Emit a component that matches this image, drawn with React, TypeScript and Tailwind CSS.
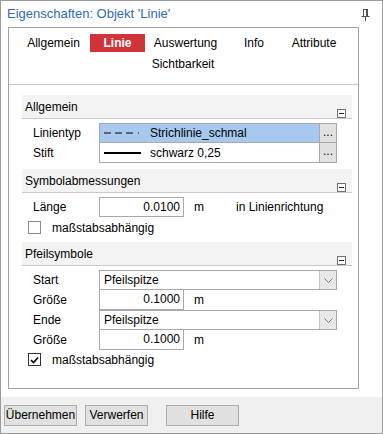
import React from 'react';

const font = { fontFamily: '"Liberation Sans", Arial, sans-serif' };

function Collapse() {
  return (
    <div className="w-[9px] h-[9px] border border-[#6f6f6f] bg-white flex items-center justify-center">
      <div className="w-[5px] h-px bg-[#222]" />
    </div>
  );
}

function SectionHeader({ title }: { title: string }) {
  return (
    <div className="h-[24px] bg-[#f3f3f3] border-b border-[#c9c9c9] flex justify-between pl-[3px] pr-[6px]">
      <span className="text-[12px] leading-[24px] text-black">{title}</span>
      <div className="pt-[14px]">
        <Collapse />
      </div>
    </div>
  );
}

function Chevron() {
  return (
    <svg width="9" height="5" viewBox="0 0 9 5">
      <path d="M0.5 0.5 L4.5 4.5 L8.5 0.5" fill="none" stroke="#7a7a7a" strokeWidth="1" />
    </svg>
  );
}

function Dropdown({ value }: { value: string }) {
  return (
    <div className="w-[238px] h-[20px] border border-[#a9a9a9] bg-white flex">
      <div className="flex-1 pl-[4px] text-[12px] leading-[18px]">{value}</div>
      <div className="w-[17px] bg-[#e8e8e8] border-l border-[#c4c4c4] flex items-center justify-center">
        <Chevron />
      </div>
    </div>
  );
}

function NumInput({ value, top = true }: { value: string; top?: boolean }) {
  return (
    <div
      className={
        'w-[85px] h-[20px] border-x border-b border-[#a9a9a9] bg-white text-right pr-[3px] text-[12px] leading-[18px] ' +
        (top ? 'border-t' : 'border-t-0')
      }
    >
      {value}
    </div>
  );
}

function Checkbox({ checked, label }: { checked: boolean; label: string }) {
  return (
    <div className="flex items-center pl-[6px] h-[13px]">
      <div
        className={
          'w-[13px] h-[13px] bg-white flex items-center justify-center ' +
          (checked ? 'border border-[#333]' : 'border border-[#8a8a8a]')
        }
      >
        {checked && (
          <svg width="9" height="8" viewBox="0 0 9 8">
            <path d="M1 4 L3.5 6.5 L8 1.5" fill="none" stroke="#000" strokeWidth="1.6" />
          </svg>
        )}
      </div>
      <span className="ml-[11px] text-[12px]">{label}</span>
    </div>
  );
}

function Label({ text }: { text: string }) {
  return <div className="w-[77px] pl-[11px] text-[12px] leading-[20px]">{text}</div>;
}

export default function App() {
  return (
    <div style={font} className="w-[383px] h-[434px] border border-[#9b9b9b] bg-white flex flex-col text-black">
      {/* title */}
      <div className="h-[26px] flex justify-between items-start">
        <span className="pl-[6px] pt-[5px] text-[13px] leading-[16px] text-[#2f6ab3]">
          Eigenschaften: Objekt 'Linie'
        </span>
        <svg className="mr-[12px] mt-[8px]" width="9" height="12" viewBox="0 0 9 12">
          <path d="M2 0.5 H7 M2.5 0.5 V7 M6.5 0.5 V7 M0.5 7.5 H8.5 M4.5 7.5 V12" stroke="#505050" strokeWidth="1" fill="none" />
          <rect x="5" y="1" width="1" height="6" fill="#505050" />
        </svg>
      </div>

      {/* inner panel */}
      <div className="ml-[7px] w-[351px] h-[362px] border border-[#a3a3a3] flex flex-col">
        {/* tabs */}
        <div className="h-[57px] border-b border-[#c9c9c9] pt-[6px] text-[12px]">
          <div className="flex h-[18px] items-center">
            <div className="ml-[9px] w-[71px] text-center">Allgemein</div>
            <div className="ml-[1px] w-[55px] h-[18px] bg-[#d13438] text-white font-bold text-center leading-[18px]">Linie</div>
            <div className="w-[81px] text-center">Auswertung</div>
            <div className="w-[56px] text-center">Info</div>
            <div className="w-[64px] text-center">Attribute</div>
          </div>
          <div className="flex h-[18px] items-center mt-[3px]">
            <div className="ml-[136px] w-[76px] text-center">Sichtbarkeit</div>
          </div>
        </div>

        {/* content */}
        <div className="pl-[13px] pr-[6px] pt-[10px] flex flex-col">
          <SectionHeader title="Allgemein" />
          <div className="flex mt-[4px]">
            <div className="flex flex-col">
              <Label text="Linientyp" />
              <Label text="Stift" />
            </div>
            <div className="w-[238px] border border-[#a9a9a9] flex flex-col bg-white text-[12px]">
              <div className="h-[19px] flex border-b border-[#a9a9a9]">
                <div className="flex-1 bg-[#a7c9ef] flex items-center pl-[4px]">
                  <svg width="40" height="4" viewBox="0 0 40 4">
                    <path d="M0 2 H7 M11 2 H18 M22 2 H29 M34 2 H35" stroke="#000" strokeWidth="1" />
                  </svg>
                  <span className="ml-[6px]">Strichlinie_schmal</span>
                </div>
                <div className="w-[17px] bg-[#e1e1e1] border-l border-[#a9a9a9] text-center leading-[16px]">...</div>
              </div>
              <div className="h-[19px] flex">
                <div className="flex-1 flex items-center pl-[4px]">
                  <svg width="40" height="4" viewBox="0 0 40 4">
                    <path d="M0 2 H37" stroke="#000" strokeWidth="2" />
                  </svg>
                  <span className="ml-[6px]">schwarz 0,25</span>
                </div>
                <div className="w-[17px] bg-[#e1e1e1] border-l border-[#a9a9a9] text-center leading-[16px]">...</div>
              </div>
            </div>
          </div>

          <div className="mt-[6px]">
            <SectionHeader title="Symbolabmessungen" />
          </div>
          <div className="flex items-center mt-[4px] text-[12px]">
            <Label text="Länge" />
            <NumInput value="0.0100" />
            <span className="ml-[10px]">m</span>
            <span className="ml-[32px]">in Linienrichtung</span>
          </div>
          <div className="mt-[4px]">
            <Checkbox checked={false} label="maßstabsabhängig" />
          </div>

          <div className="mt-[8px]">
            <SectionHeader title="Pfeilsymbole" />
          </div>
          <div className="flex items-center mt-[4px] text-[12px]">
            <Label text="Start" />
            <Dropdown value="Pfeilspitze" />
          </div>
          <div className="flex items-center text-[12px]">
            <Label text="Größe" />
            <NumInput value="0.1000" top={false} />
            <span className="ml-[10px]">m</span>
          </div>
          <div className="flex items-center text-[12px]">
            <Label text="Ende" />
            <Dropdown value="Pfeilspitze" />
          </div>
          <div className="flex items-center text-[12px]">
            <Label text="Größe" />
            <NumInput value="0.1000" top={false} />
            <span className="ml-[10px]">m</span>
          </div>
          <div className="mt-[3px]">
            <Checkbox checked={true} label="maßstabsabhängig" />
          </div>
        </div>
      </div>

      {/* buttons */}
      <div className="mt-auto h-[36px] bg-[#f0f0f0] flex items-start pt-[8px] pl-[3px] text-[12px]">
        <button className="w-[73px] h-[21px] border border-[#adadad] bg-[#e1e1e1] leading-[19px]">Übernehmen</button>
        <button className="ml-[8px] w-[63px] h-[21px] border border-[#adadad] bg-[#e1e1e1] leading-[19px]">Verwerfen</button>
        <button className="ml-[18px] w-[73px] h-[21px] border border-[#adadad] bg-[#e1e1e1] leading-[19px]">Hilfe</button>
      </div>
    </div>
  );
}
